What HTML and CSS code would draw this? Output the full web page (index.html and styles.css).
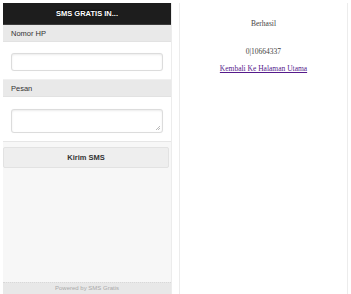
FILE: index.html
```html
<!DOCTYPE html>
<html>
<head>
<meta charset="utf-8">
<link rel="stylesheet" href="styles.css">
</head>
<body>
<div class="page">
  <div class="left">
    <div class="header">SMS GRATIS IN...</div>
    <div class="label">Nomor HP</div>
    <div class="field">
      <div class="input"></div>
    </div>
    <div class="label">Pesan</div>
    <div class="field field-area">
      <div class="textarea"><span class="grip"></span></div>
    </div>
    <div class="button">Kirim SMS</div>
    <div class="spacer"></div>
    <div class="footer">Powered by SMS Gratis</div>
  </div>
  <div class="right">
    <p class="msg">Berhasil</p>
    <p class="num">0|10664337</p>
    <a class="link" href="#">Kembali Ke Halaman Utama</a>
  </div>
</div>
</body>
</html>
```
FILE: styles.css
```css
html, body {
  margin: 0;
  padding: 0;
  background: #ffffff;
  width: 351px;
  height: 294px;
  overflow: hidden;
}
.page {
  display: flex;
  gap: 7px;
  padding: 3px 0 0 3px;
  height: 294px;
  box-sizing: border-box;
}
.left {
  width: 168px;
  display: flex;
  flex-direction: column;
  background: #f7f7f7;
  border-right: 1px solid #ececec;
  font-family: "Liberation Sans", Arial, sans-serif;
  height: 291px;
}
.header {
  height: 21px;
  background: #1d1d1d;
  border-bottom: 1px solid #3c3c3c;
  color: #ffffff;
  font-weight: bold;
  font-size: 7.5px;
  display: flex;
  align-items: center;
  justify-content: center;
  text-shadow: 0 -1px 1px #000;
}
.label {
  height: 16px;
  background: #e9e9e9;
  border-bottom: 1px solid #e2e2e2;
  color: #333333;
  font-size: 7.5px;
  display: flex;
  align-items: center;
  padding-left: 8px;
}
.field {
  background: #ffffff;
  height: 38px;
  padding: 11px 8px 0 8px;
  box-sizing: border-box;
  border-bottom: 1px solid #f0f0f0;
}
.field-area {
  height: 45px;
  padding-top: 12px;
  border-bottom: 1px solid #e6e6e6;
}
.input, .textarea {
  height: 18px;
  border: 1px solid #dcdcdc;
  border-radius: 3px;
  background: #ffffff;
  box-shadow: inset 0 1px 2px rgba(0,0,0,0.08), 0 0 1px #eee;
  box-sizing: border-box;
}
.textarea {
  height: 24px;
  position: relative;
}
.grip {
  position: absolute;
  right: 2px;
  bottom: 2px;
  width: 4px;
  height: 4px;
  background: linear-gradient(135deg, transparent 45%, #bbb 45%, #bbb 55%, transparent 55%, transparent 75%, #bbb 75%, #bbb 85%, transparent 85%);
}
.button {
  margin: 5px 2px 0 0;
  height: 21px;
  background: #eeeeee;
  border: 1px solid #e2e2e2;
  border-radius: 2px;
  box-sizing: border-box;
  color: #333333;
  font-weight: bold;
  font-size: 7.5px;
  display: flex;
  align-items: center;
  justify-content: center;
}
.spacer {
  flex: 1;
}
.footer {
  height: 9px;
  background: #e8e8e8;
  border-top: 1px dotted #d8d8d8;
  color: #aaa;
  font-size: 6px;
  line-height: 7px;
  text-align: center;
  padding-top: 2px;
  overflow: hidden;
}
.right {
  width: 167px;
  height: 291px;
  background: #ffffff;
  border-left: 1px solid #ececec;
  border-right: 1px solid #ececec;
  display: flex;
  flex-direction: column;
  align-items: center;
  font-family: "Liberation Serif", "Times New Roman", serif;
  font-size: 7.5px;
  color: #444;
}
.msg {
  margin: 16px 0 0 0;
}
.num {
  margin: 19px 0 0 0;
}
.link {
  margin-top: 8px;
  color: #551a8b;
  text-decoration: underline;
}
```
